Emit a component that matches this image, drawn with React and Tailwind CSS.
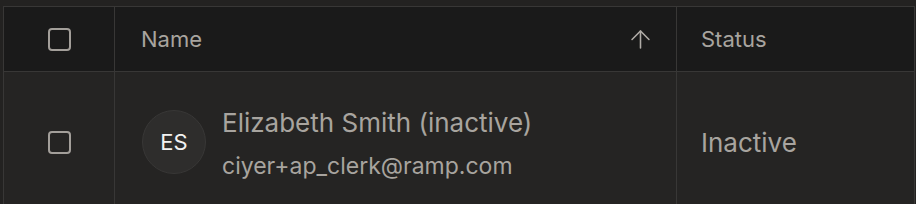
import { ArrowUp } from 'lucide-react'

function Checkbox() {
  return <div className="w-[23px] h-[23px] rounded-[4px] border-2 border-[#a39f9a]" />
}

export default function App() {
  return (
    <div className="w-[916px] h-[204px] overflow-hidden bg-[#232221] pt-[6px] pl-[3px] font-['Inter',sans-serif]">
      <div className="w-[912px] border-l border-t border-r border-[#383736]">
        {/* Header */}
        <div className="flex h-[65px] bg-[#1a1a1a] border-b border-[#383736]">
          <div className="w-[111px] shrink-0 flex items-center justify-center border-r border-[#383736]">
            <Checkbox />
          </div>
          <div className="w-[562px] shrink-0 flex items-center justify-between pl-[26px] pr-[21px] border-r border-[#383736]">
            <span className="text-[22px] leading-[28px] text-[#a8a49f]">Name</span>
            <ArrowUp size={29} strokeWidth={1.3} className="text-[#b0aca7]" />
          </div>
          <div className="flex-1 flex items-center pl-[24px]">
            <span className="text-[22px] leading-[28px] text-[#a8a49f]">Status</span>
          </div>
        </div>

        {/* Row */}
        <div className="flex h-[140px] bg-[#252423]">
          <div className="w-[111px] shrink-0 flex items-center justify-center border-r border-[#383736]">
            <Checkbox />
          </div>
          <div className="w-[562px] shrink-0 flex items-center gap-4 pl-[27px] border-r border-[#383736]">
            <div className="w-16 h-16 rounded-full bg-[#2e2d2c] border border-[#383736] flex items-center justify-center text-[22px] text-[#f2f2f2]">
              ES
            </div>
            <div className="flex flex-col gap-[13px] pt-[3px]">
              <span className="text-[26px] leading-[32px] text-[#a8a49f]">Elizabeth Smith (inactive)</span>
              <span className="text-[23px] leading-[28px] text-[#a8a49f]">ciyer+ap_clerk@ramp.com</span>
            </div>
          </div>
          <div className="flex-1 flex items-center pl-[24px] pt-[2px]">
            <span className="text-[26px] leading-[32px] text-[#a8a49f]">Inactive</span>
          </div>
        </div>
      </div>
    </div>
  )
}
